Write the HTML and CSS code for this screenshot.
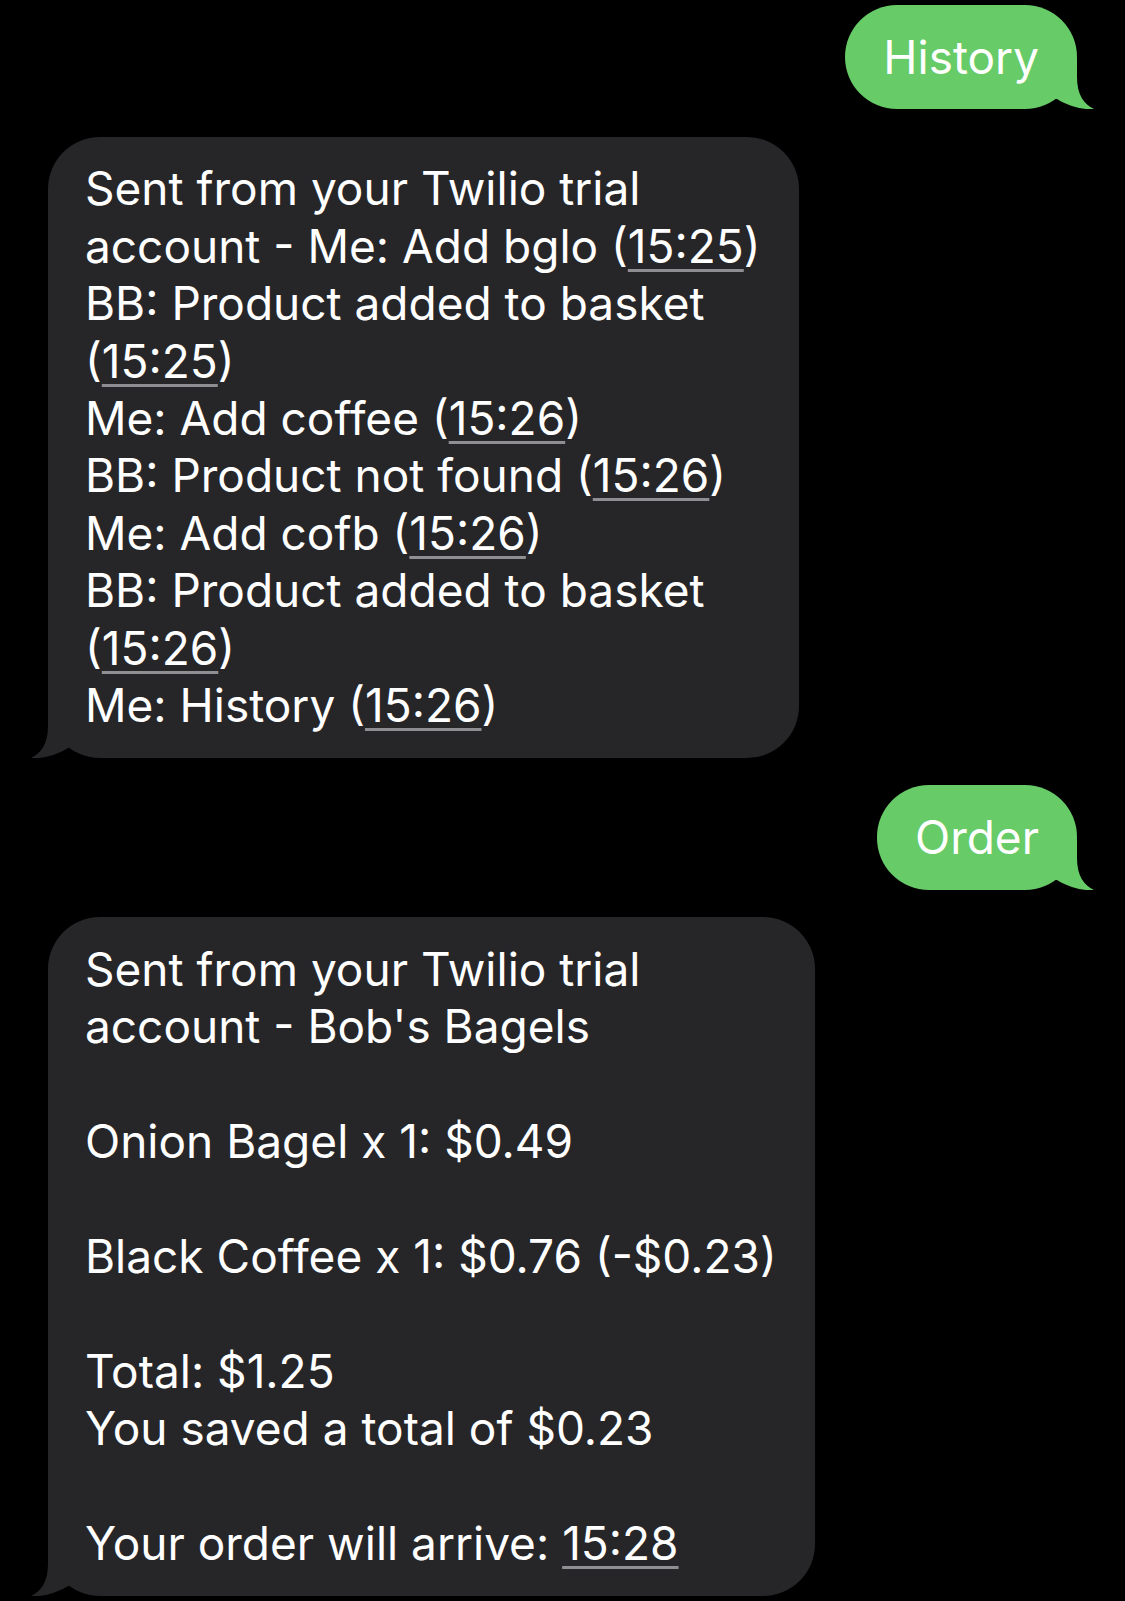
FILE: index.html
```html
<!DOCTYPE html>
<html>
<head>
<meta charset="utf-8">
<link rel="stylesheet" href="styles.css">
</head>
<body>
<div class="thread">
  <div class="row row-sent">
    <div class="bubble sent">History<svg class="tail tail-right" viewBox="0 0 56 50" width="56" height="50"><path d="M37 0 L37 18 C37 36 44 45 54 50 C44 51 30 48 17 40 L0 40 L0 0 Z"/></svg></div>
  </div>
  <div class="row row-recv">
    <div class="bubble recv">Sent from your Twilio trial<br>account - Me: Add bglo (<span class="ts">15:25</span>)<br>BB: Product added to basket<br>(<span class="ts">15:25</span>)<br>Me: Add coffee (<span class="ts">15:26</span>)<br>BB: Product not found (<span class="ts">15:26</span>)<br>Me: Add cofb (<span class="ts">15:26</span>)<br>BB: Product added to basket<br>(<span class="ts">15:26</span>)<br>Me: History (<span class="ts">15:26</span>)<svg class="tail tail-left" viewBox="0 0 56 50" width="56" height="50"><path d="M37 0 L37 18 C37 36 44 45 54 50 C44 51 30 48 17 40 L0 40 L0 0 Z"/></svg></div>
  </div>
  <div class="row row-sent">
    <div class="bubble sent">Order<svg class="tail tail-right" viewBox="0 0 56 50" width="56" height="50"><path d="M37 0 L37 18 C37 36 44 45 54 50 C44 51 30 48 17 40 L0 40 L0 0 Z"/></svg></div>
  </div>
  <div class="row row-recv">
    <div class="bubble recv">Sent from your Twilio trial<br>account - Bob's Bagels<br><br>Onion Bagel x 1: $0.49<br><br>Black Coffee x 1: $0.76 (-$0.23)<br><br>Total: $1.25<br>You saved a total of $0.23<br><br>Your order will arrive: <span class="ts">15:28</span><svg class="tail tail-left" viewBox="0 0 56 50" width="56" height="50"><path d="M37 0 L37 18 C37 36 44 45 54 50 C44 51 30 48 17 40 L0 40 L0 0 Z"/></svg></div>
  </div>
</div>
</body>
</html>
```

FILE: styles.css
```css
html, body {
  margin: 0;
  padding: 0;
  background: #000;
}

body {
  width: 1125px;
  height: 1601px;
  overflow: hidden;
  font-family: "Inter", "Liberation Sans", sans-serif;
  font-size: 46px;
  line-height: 57.4px;
  color: #fff;
}

.thread {
  display: flex;
  flex-direction: column;
  gap: 27.5px;
  padding-top: 5px;
}

.row {
  display: flex;
}

.row-sent {
  justify-content: flex-end;
  padding-right: 48px;
}

.row-recv {
  justify-content: flex-start;
  padding-left: 48px;
}

.bubble {
  position: relative;
  white-space: nowrap;
  padding: 23.5px 38px 23.5px 37px;
  border-radius: 52px;
}

.sent {
  background: #67cb68;
  padding-left: 38px;
  padding-right: 38px;
}

.recv {
  background: #262629;
}

.tail {
  position: absolute;
  bottom: 0;
  display: block;
}

.tail-right {
  right: -19px;
  fill: #67cb68;
}

.tail-left {
  left: -19px;
  transform: scaleX(-1);
  fill: #262629;
}

.ts {
  text-decoration: underline;
  text-decoration-color: #8e8e93;
  text-decoration-thickness: 3px;
  text-underline-offset: 6px;
}
```
